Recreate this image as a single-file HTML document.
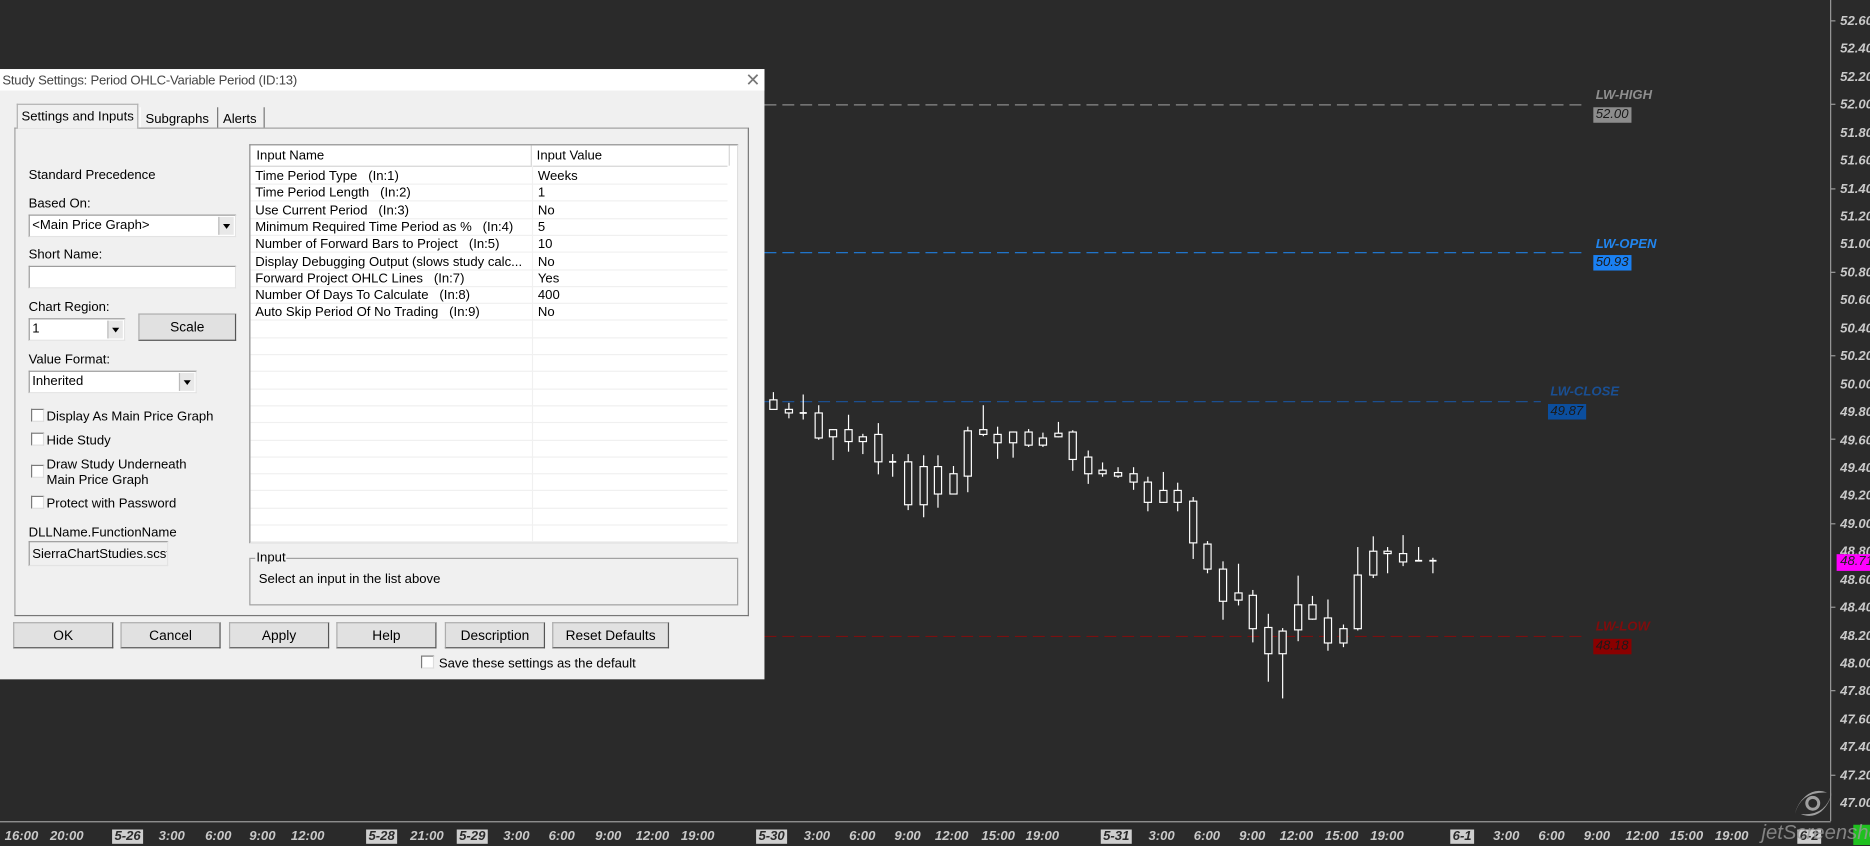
<!DOCTYPE html>
<html><head><meta charset="utf-8">
<style>
html,body{margin:0;padding:0;background:#2a2a2a;overflow:hidden;width:1870px;height:845px}
#w{position:absolute;left:0;top:0;width:1568px;height:709px;transform:scale(1.19260,1.19182);transform-origin:0 0;background:#2a2a2a;font-family:"Liberation Sans",sans-serif}
.a{position:absolute}
.pl{position:absolute;left:1543px;height:14px;line-height:14px;margin-top:2px;font:italic bold 11px "Liberation Sans",sans-serif;color:#c9c9c9;white-space:nowrap}
.tk{position:absolute;left:1535px;width:4px;height:1px;background:#9a9a9a}
.tl{position:absolute;top:696px;height:14px;line-height:14px;font:italic bold 11px "Liberation Sans",sans-serif;color:#c9c9c9;white-space:nowrap;transform:translateX(-50%)}
.db{background:#cfcfcf;color:#2a2a2a;padding:0 2px}
.lab{position:absolute;font:italic bold 11px "Liberation Sans",sans-serif;white-space:nowrap;margin-top:1px}
.box{position:absolute;font:italic 11px "Liberation Sans",sans-serif;color:#1a1a1a;height:13px;line-height:13px;padding:0 2px;margin-top:1px}
#dlg{position:absolute;left:0;top:58px;width:641px;height:512px;background:#f0f0f0;font-size:11px;color:#000}
#dlg .a{white-space:nowrap;margin-top:1px}
.btn{position:absolute;top:464px;height:22px;background:#e1e1e1;border:1px solid #adadad;border-right-color:#555;border-bottom-color:#555;box-sizing:border-box;text-align:center;line-height:22px;font-size:11.5px}
.cb{position:absolute;width:9px;height:9px;background:#fff;border:1px solid #7a7a7a;border-right-color:#ddd;border-bottom-color:#ddd}
.inp{position:absolute;background:#fff;border:1px solid #9a9a9a;border-right-color:#e3e3e3;border-bottom-color:#e3e3e3;box-sizing:border-box;line-height:17px;padding-left:2px;overflow:hidden;white-space:nowrap}
.dd{position:absolute;right:1px;top:1px;width:12px;bottom:1px;background:#e8e8e8;border-left:1px solid #bbb}
.dd:after{content:"";position:absolute;left:3px;top:6px;border:3px solid transparent;border-top:4px solid #000}
.row{position:absolute;left:0;width:400px;height:14px;border-bottom:1px solid #f0f0f0;line-height:15px}
</style></head><body><div id="w">

<svg class="a" style="left:0;top:0" width="1568" height="709">
<line x1="641" y1="88" x2="1330" y2="88" stroke="#8a8a8a" stroke-width="1" stroke-dasharray="10,5"/>
<line x1="641" y1="212" x2="1330" y2="212" stroke="#1f7fe0" stroke-width="1" stroke-dasharray="10,5"/>
<line x1="641" y1="337" x2="1292" y2="337" stroke="#1c4f8f" stroke-width="1" stroke-dasharray="10,5"/>
<line x1="641" y1="534" x2="1330" y2="534" stroke="#7a1010" stroke-width="1" stroke-dasharray="10,5"/>
<line x1="1535" y1="0" x2="1535" y2="689" stroke="#9a9a9a"/>
<line x1="0" y1="689.5" x2="1535" y2="689.5" stroke="#9a9a9a"/>
</svg>
<svg class="a" style="left:0;top:0" width="1568" height="709" id="cs"></svg>
<script>
var d=[[28,58,86,38,86],[62,86,97,70,116],[95,97,100,45,120],[129,97,172,75,182],[162,148,170,148,242],[196,148,184,105,215],[230,170,184,162,224],[263,163,244,132,284],[297,243,245,225,290],[330,243,373,225,392],[364,259,373,228,412],[397,259,343,228,385],[431,280,343,258,343],[465,150,286,142,338],[498,148,163,78,170],[532,163,187,140,236],[566,154,187,154,233],[599,154,193,148,200],[633,172,193,158,200],[666,160,170,128,174],[700,154,236,150,275],[734,229,280,212,311],[767,271,280,250,290],[801,277,287,264,296],[834,280,306,264,330],[868,307,368,292,395],[901,331,365,276,371],[935,331,365,310,395],[969,364,487,352,539],[1002,490,568,486,582],[1036,568,664,546,719],[1069,640,661,552,677],[1103,646,745,630,788],[1137,742,820,702,905],[1170,753,820,745,956],[1204,673,748,588,785],[1237,673,716,648,722],[1271,715,787,660,815],[1305,745,787,735,803],[1338,586,746,501,752],[1372,514,583,471,597],[1405,514,521,501,581],[1439,520,547,465,560],[1473,541,544,501,544],[1506,541,547,534,581]];
var s='';
d.forEach(function(c){var x=Math.round(637.3+c[0]*0.3744)+0.5,bt=Math.round(318.6+c[1]*0.2795)+0.5,bb=Math.round(318.6+c[2]*0.2795)+0.5,wt=Math.round(318.6+c[3]*0.2795),wb=Math.round(318.6+c[4]*0.2795);
s+='<line x1="'+x+'" y1="'+wt+'" x2="'+x+'" y2="'+wb+'" stroke="#fff"/>';
if(bb-bt<1.5){s+='<line x1="'+(x-3)+'" y1="'+bt+'" x2="'+(x+3)+'" y2="'+bt+'" stroke="#fff" stroke-width="1.5"/>';}
else s+='<rect x="'+(x-3)+'" y="'+bt+'" width="6" height="'+(bb-bt)+'" fill="#2a2a2a" stroke="#fff"/>';});
document.getElementById('cs').innerHTML=s;
</script>

<div class="lab" style="left:1338px;top:73px;color:#8e8e8e">LW-HIGH</div>
<div class="box" style="left:1336px;top:89px;background:#8c8c8c">52.00</div>
<div class="lab" style="left:1338px;top:198px;color:#2185ee">LW-OPEN</div>
<div class="box" style="left:1336px;top:213px;background:#1a80f2">50.93</div>
<div class="lab" style="left:1300px;top:322px;color:#1a4f92">LW-CLOSE</div>
<div class="box" style="left:1298px;top:338px;background:#0b4e9e">49.87</div>
<div class="lab" style="left:1338px;top:519px;color:#800c0c">LW-LOW</div>
<div class="box" style="left:1336px;top:535px;background:#8a0000">48.18</div>

<div class="pl" style="top:10px">52.60</div><div class="pl" style="top:33.4px">52.40</div><div class="pl" style="top:56.9px">52.20</div><div class="pl" style="top:80.3px">52.00</div><div class="pl" style="top:103.7px">51.80</div><div class="pl" style="top:127.2px">51.60</div><div class="pl" style="top:150.6px">51.40</div><div class="pl" style="top:174px">51.20</div><div class="pl" style="top:197.4px">51.00</div><div class="pl" style="top:220.9px">50.80</div><div class="pl" style="top:244.3px">50.60</div><div class="pl" style="top:267.7px">50.40</div><div class="pl" style="top:291.2px">50.20</div><div class="pl" style="top:314.6px">50.00</div><div class="pl" style="top:338px">49.80</div><div class="pl" style="top:361.5px">49.60</div><div class="pl" style="top:384.9px">49.40</div><div class="pl" style="top:408.3px">49.20</div><div class="pl" style="top:431.7px">49.00</div><div class="pl" style="top:455.2px">48.80</div><div class="pl" style="top:478.6px">48.60</div><div class="pl" style="top:502px">48.40</div><div class="pl" style="top:525.5px">48.20</div><div class="pl" style="top:548.9px">48.00</div><div class="pl" style="top:572.3px">47.80</div><div class="pl" style="top:595.8px">47.60</div><div class="pl" style="top:619.2px">47.40</div><div class="pl" style="top:642.6px">47.20</div><div class="pl" style="top:666px">47.00</div>
<div class="pl" style="top:463px;left:1540px;background:#ff00ff;color:#222;font-weight:normal;padding:0 3px">48.71</div>
<div class="tk" style="top:17px"></div><div class="tk" style="top:87px"></div><div class="tk" style="top:158px"></div><div class="tk" style="top:228px"></div><div class="tk" style="top:298px"></div><div class="tk" style="top:368px"></div><div class="tk" style="top:439px"></div><div class="tk" style="top:509px"></div><div class="tk" style="top:579px"></div><div class="tk" style="top:650px"></div>

<div class="tl" style="left:18px">16:00</div><div class="tl" style="left:56px">20:00</div><div class="tl" style="left:107px"><span class="db">5-26</span></div><div class="tl" style="left:144px">3:00</div><div class="tl" style="left:183px">6:00</div><div class="tl" style="left:220px">9:00</div><div class="tl" style="left:258px">12:00</div><div class="tl" style="left:320px"><span class="db">5-28</span></div><div class="tl" style="left:358px">21:00</div><div class="tl" style="left:396px"><span class="db">5-29</span></div><div class="tl" style="left:433px">3:00</div><div class="tl" style="left:471px">6:00</div><div class="tl" style="left:510px">9:00</div><div class="tl" style="left:547px">12:00</div><div class="tl" style="left:585px">19:00</div><div class="tl" style="left:647px"><span class="db">5-30</span></div><div class="tl" style="left:685px">3:00</div><div class="tl" style="left:723px">6:00</div><div class="tl" style="left:761px">9:00</div><div class="tl" style="left:798px">12:00</div><div class="tl" style="left:837px">15:00</div><div class="tl" style="left:874px">19:00</div><div class="tl" style="left:936px"><span class="db">5-31</span></div><div class="tl" style="left:974px">3:00</div><div class="tl" style="left:1012px">6:00</div><div class="tl" style="left:1050px">9:00</div><div class="tl" style="left:1087px">12:00</div><div class="tl" style="left:1125px">15:00</div><div class="tl" style="left:1163px">19:00</div><div class="tl" style="left:1226px"><span class="db">6-1</span></div><div class="tl" style="left:1263px">3:00</div><div class="tl" style="left:1301px">6:00</div><div class="tl" style="left:1339px">9:00</div><div class="tl" style="left:1377px">12:00</div><div class="tl" style="left:1414px">15:00</div><div class="tl" style="left:1452px">19:00</div><div class="tl" style="left:1517px"><span class="db">6-2</span></div>
<div class="a" style="left:1554px;top:692px;width:14px;height:17px;background:#1fc01f"></div>
<div class="a" style="left:1477px;top:689px;font:italic 17px 'Liberation Sans',sans-serif;color:#9a9a9a;opacity:.8">jetScreenshot</div>
<svg class="a" style="left:1502px;top:660px" width="36" height="28"><path d="M3 23 Q8 4 30 5 Q20 1 12 8 Q5 14 3 23Z M34 5 Q29 25 8 23 Q17 27 25 21 Q32 15 34 5Z" fill="#a0a0a0"/><circle cx="18" cy="14" r="5" fill="none" stroke="#a0a0a0" stroke-width="2.5"/></svg>

<div id="dlg">
 <div class="a" style="left:0;top:-1px;width:641px;height:18px;background:#fff"></div>
 <div class="a" style="left:2px;top:3px;font-size:11px;color:#444;letter-spacing:-0.2px">Study Settings: Period OHLC-Variable Period (ID:13)</div>
 <div class="a" style="left:625px;top:-1px;font-size:15px;color:#777">✕</div>
 <div class="a" style="left:12px;top:48px;width:616px;height:410px;border:1px solid #a0a0a0;border-right-color:#777;border-bottom-color:#777;background:#f0f0f0;box-sizing:border-box"></div>
 <div class="a" style="left:14px;top:28px;width:102px;height:21px;background:#f0f0f0;border:1px solid #b0b0b0;border-bottom:none;box-sizing:border-box"></div>
 <div class="a" style="left:18px;top:33px">Settings and Inputs</div>
 <div class="a" style="left:117px;top:31px;width:64px;height:17px;border-right:1px solid #777;border-left:1px solid #fff"></div>
 <div class="a" style="left:122px;top:35px">Subgraphs</div>
 <div class="a" style="left:182px;top:31px;width:39px;height:17px;border-right:1px solid #777"></div>
 <div class="a" style="left:187px;top:35px">Alerts</div>

 <div class="a" style="left:24px;top:82px">Standard Precedence</div>
 <div class="a" style="left:24px;top:106px">Based On:</div>
 <div class="inp" style="left:24px;top:122px;width:174px;height:19px">&lt;Main Price Graph&gt;<div class="dd"></div></div>
 <div class="a" style="left:24px;top:149px">Short Name:</div>
 <div class="inp" style="left:24px;top:165px;width:174px;height:19px"></div>
 <div class="a" style="left:24px;top:193px">Chart Region:</div>
 <div class="inp" style="left:24px;top:209px;width:81px;height:19px">1<div class="dd"></div></div>
 <div class="btn" style="left:116px;top:205px;width:82px;height:23px;line-height:23px">Scale</div>
 <div class="a" style="left:24px;top:237px">Value Format:</div>
 <div class="inp" style="left:24px;top:253px;width:141px;height:19px">Inherited<div class="dd"></div></div>
 <div class="cb" style="left:26px;top:285px"></div><div class="a" style="left:39px;top:285px">Display As Main Price Graph</div>
 <div class="cb" style="left:26px;top:305px"></div><div class="a" style="left:39px;top:305px">Hide Study</div>
 <div class="cb" style="left:26px;top:332px"></div><div class="a" style="left:39px;top:325px;line-height:13px">Draw Study Underneath<br>Main Price Graph</div>
 <div class="cb" style="left:26px;top:358px"></div><div class="a" style="left:39px;top:358px">Protect with Password</div>
 <div class="a" style="left:24px;top:382px">DLLName.FunctionName</div>
 <div class="inp" style="left:24px;top:396px;width:117px;height:21px;background:#f0f0f0;line-height:20px">SierraChartStudies.scsf</div>

 <div class="a" style="left:209px;top:62px;width:410px;height:335px;background:#fff;border:1px solid #8a8a8a;border-right-color:#ddd;border-bottom-color:#ddd;box-sizing:border-box;overflow:hidden">
  <div class="a" style="left:0;top:-1px;width:400px;height:17px;background:#fff;border-bottom:1px solid #d5d5d5"></div>
  <div class="a" style="left:235px;top:-1px;width:1px;height:17px;background:#d5d5d5"></div>
  <div class="a" style="left:401px;top:-1px;width:1px;height:17px;background:#d5d5d5"></div>
  <div class="a" style="left:5px;top:2px">Input Name</div>
  <div class="a" style="left:240px;top:2px">Input Value</div>
  <div class="a" style="left:236px;top:16px;width:1px;height:320px;background:#f0f0f0"></div>
  <div class="a" style="left:0;top:17px;width:400px">
   <div class="row" style="top:0"><span class="a" style="left:4px">Time Period Type &nbsp; (In:1)</span><span class="a" style="left:241px">Weeks</span></div>
   <div class="row" style="top:14.3px"><span class="a" style="left:4px">Time Period Length &nbsp; (In:2)</span><span class="a" style="left:241px">1</span></div>
   <div class="row" style="top:28.6px"><span class="a" style="left:4px">Use Current Period &nbsp; (In:3)</span><span class="a" style="left:241px">No</span></div>
   <div class="row" style="top:42.9px"><span class="a" style="left:4px">Minimum Required Time Period as % &nbsp; (In:4)</span><span class="a" style="left:241px">5</span></div>
   <div class="row" style="top:57.2px"><span class="a" style="left:4px">Number of Forward Bars to Project &nbsp; (In:5)</span><span class="a" style="left:241px">10</span></div>
   <div class="row" style="top:71.5px"><span class="a" style="left:4px">Display Debugging Output (slows study calc...</span><span class="a" style="left:241px">No</span></div>
   <div class="row" style="top:85.8px"><span class="a" style="left:4px">Forward Project OHLC Lines &nbsp; (In:7)</span><span class="a" style="left:241px">Yes</span></div>
   <div class="row" style="top:100.1px"><span class="a" style="left:4px">Number Of Days To Calculate &nbsp; (In:8)</span><span class="a" style="left:241px">400</span></div>
   <div class="row" style="top:114.4px"><span class="a" style="left:4px">Auto Skip Period Of No Trading &nbsp; (In:9)</span><span class="a" style="left:241px">No</span></div>
   <div class="row" style="top:128.7px"></div><div class="row" style="top:143px"></div><div class="row" style="top:157.3px"></div><div class="row" style="top:171.6px"></div><div class="row" style="top:185.9px"></div><div class="row" style="top:200.2px"></div><div class="row" style="top:214.5px"></div><div class="row" style="top:228.8px"></div><div class="row" style="top:243.1px"></div><div class="row" style="top:257.4px"></div><div class="row" style="top:271.7px"></div><div class="row" style="top:286px"></div><div class="row" style="top:300.3px"></div>
  </div>
 </div>
 <div class="a" style="left:209px;top:409px;width:410px;height:40px;border:1px solid #a0a0a0;box-sizing:border-box"></div>
 <div class="a" style="left:214px;top:403px;background:#f0f0f0;padding:0 1px">Input</div>
 <div class="a" style="left:217px;top:421px">Select an input in the list above</div>

 <div class="btn" style="left:11px;width:84px">OK</div>
 <div class="btn" style="left:101px;width:84px">Cancel</div>
 <div class="btn" style="left:192px;width:84px">Apply</div>
 <div class="btn" style="left:282px;width:84px">Help</div>
 <div class="btn" style="left:373px;width:84px">Description</div>
 <div class="btn" style="left:463px;width:98px">Reset Defaults</div>
 <div class="cb" style="left:353px;top:492px"></div><div class="a" style="left:368px;top:492px">Save these settings as the default</div>
</div>
</div></body></html>
